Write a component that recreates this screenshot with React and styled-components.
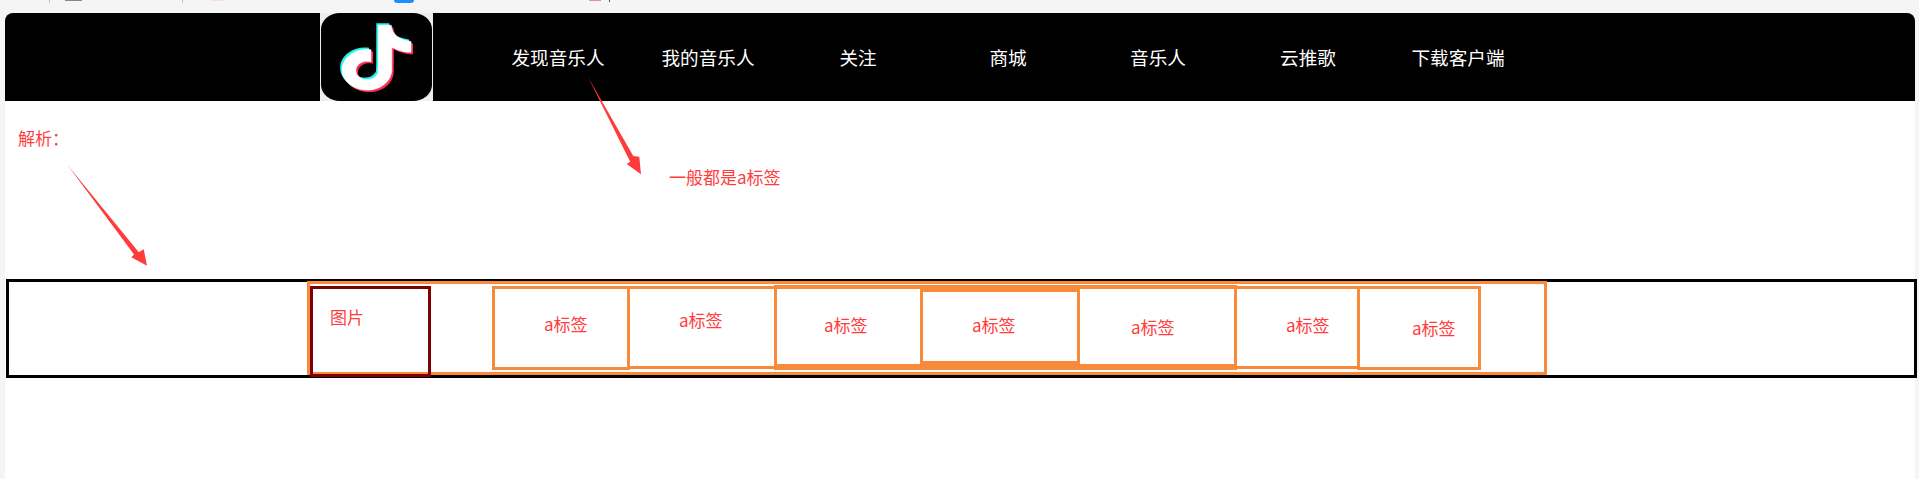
import React from "react";
import styled, { createGlobalStyle } from "styled-components";

const Global = createGlobalStyle`
  html, body { margin: 0; padding: 0; height: 100%; background: #f5f5f5; overflow: hidden; }
  body { font-family: "Noto Sans CJK SC", "Noto Sans", sans-serif; }
`;

const RED = "#ff3d3d";
const ORANGE = "#f98a3a";

const Page = styled.div`
  height: 479px;
  display: flex;
  flex-direction: column;
`;

const TopStrip = styled.div`
  height: 13px;
  display: flex;
  align-items: flex-start;
  padding-left: 49px;
`;

const Mark = styled.span`
  flex: none;
  width: ${(p) => p.$w}px;
  height: ${(p) => p.$h}px;
  background: ${(p) => p.$c};
  margin-left: ${(p) => p.$ml}px;
`;

const BluePill = styled.span`
  flex: none;
  width: 20px;
  height: 3px;
  background: #1e8fff;
  border-radius: 0 0 3px 3px;
  margin-left: ${(p) => p.$ml}px;
`;

const Canvas = styled.main`
  position: relative;
  flex: 1;
  margin: 0 4px 0 5px;
  background: #fff;
  border-radius: 8px 8px 0 0;
`;

const Header = styled.header`
  height: 88px;
  background: #000;
  border-radius: 8px 8px 0 0;
  display: flex;
  padding-left: 315px;
`;

const Logo = styled.svg`
  width: 113px;
  height: 88px;
  display: block;
  background: #eeeeee;
  flex: none;
`;

const Nav = styled.nav`
  display: flex;
  margin-left: 50px;
`;

const NavItem = styled.a`
  width: 150px;
  display: flex;
  align-items: center;
  justify-content: center;
  color: #fff;
  font-size: 18.6px;
  line-height: 88px;
  white-space: nowrap;
`;

const Note = styled.p`
  position: absolute;
  margin: 0;
  left: ${(p) => p.$left}px;
  top: ${(p) => p.$top}px;
  color: ${RED};
  font-size: 17px;
  line-height: 17px;
  white-space: nowrap;
`;

const Arrow = styled.svg`
  position: absolute;
  left: ${(p) => p.$left}px;
  top: ${(p) => p.$top}px;
  fill: #ff3b3b;
  overflow: visible;
`;

const Frame = styled.section`
  box-sizing: border-box;
  width: 1911px;
  height: 99px;
  margin: 178px 0 0 1px;
  border: 3px solid #000;
  padding-left: 298px;
`;

const Wrapper = styled.div`
  box-sizing: border-box;
  width: 1240px;
  height: 94px;
  margin-top: -1px;
  border: 3px solid ${ORANGE};
  padding-top: 2px;
  display: flex;
  align-items: flex-start;
`;

const ImageBox = styled.div`
  box-sizing: border-box;
  width: 121px;
  height: 91px;
  border: 3px solid #7f0000;
  flex: none;
`;

const LinkBox = styled.div`
  box-sizing: border-box;
  flex: none;
  width: ${(p) => p.$w}px;
  height: ${(p) => p.$h}px;
  margin-left: ${(p) => p.$ml}px;
  margin-top: ${(p) => p.$mt || 0}px;
  border: 3px solid ${ORANGE};
  border-top-width: ${(p) => p.$bt || 3}px;
  border-bottom-width: ${(p) => p.$bb || 3}px;
`;

const Label = styled.span`
  display: block;
  margin-left: ${(p) => p.$x}px;
  margin-top: ${(p) => p.$y}px;
  color: ${RED};
  font-size: 17px;
  line-height: 17px;
  white-space: nowrap;
`;

const NOTE =
  "M12.525.02c1.31-.02 2.61-.01 3.91-.02.08 1.53.63 3.09 1.75 4.17 1.12 1.11 2.7 1.62 4.24 1.79v4.03c-1.44-.05-2.89-.35-4.2-.97-.57-.26-1.1-.59-1.62-.93-.01 2.92.01 5.84-.02 8.75-.08 1.4-.54 2.79-1.35 3.94-1.31 1.92-3.58 3.17-5.91 3.21-1.43.08-2.86-.31-4.08-1.03-2.02-1.19-3.44-3.37-3.65-5.71-.02-.5-.03-1-.01-1.49.18-1.9 1.12-3.72 2.58-4.96 1.66-1.44 3.98-2.13 6.15-1.72.02 1.48-.04 2.96-.04 4.44-.99-.32-2.15-.23-3.02.37-.63.41-1.11 1.04-1.36 1.75-.21.51-.15 1.07-.14 1.61.24 1.64 1.82 3.02 3.5 2.87 1.12-.01 2.19-.66 2.77-1.61.19-.33.4-.67.41-1.06.1-1.79.06-3.57.07-5.36.01-4.03-.01-8.05.02-12.07z";

const navItems = ["发现音乐人", "我的音乐人", "关注", "商城", "音乐人", "云推歌", "下载客户端"];

const links = [
  { w: 138, h: 84, ml: 61, x: 49, y: 26 },
  { w: 150, h: 83, ml: -3, x: 49, y: 22 },
  { w: 149, h: 85, ml: -3, mt: -1, bt: 4, bb: 6, x: 47, y: 27 },
  { w: 160, h: 85, ml: -3, mt: -1, bt: 7, bb: 9, x: 49, y: 24 },
  { w: 160, h: 85, ml: -3, mt: -1, bt: 4, bb: 6, x: 51, y: 29 },
  { w: 126, h: 83, ml: -3, x: 49, y: 27 },
  { w: 124, h: 84, ml: -3, x: 52, y: 30 },
];

export default function App() {
  return (
    <Page>
      <Global />
      <TopStrip>
        <Mark $w={1} $h={3} $c="#c4c4c4" $ml={0} />
        <Mark $w={17} $h={1} $c="#888888" $ml={15} />
        <Mark $w={1} $h={3} $c="#c4c4c4" $ml={100} />
        <Mark $w={12} $h={1} $c="#fadcdc" $ml={28} />
        <BluePill $ml={171} />
        <Mark $w={12} $h={1} $c="#e88aa0" $ml={175} />
        <Mark $w={1} $h={2} $c="#555555" $ml={8} />
      </TopStrip>
      <Canvas>
        <Header>
          <Logo viewBox="0 0 113 88" preserveAspectRatio="none">
            <rect x="1" y="0" width="111" height="88" rx="19" ry="16" fill="#000" />
            <g transform="translate(15 10.3) scale(3.3 2.7)">
              <path d={NOTE} fill="#25f4ee" />
            </g>
            <g transform="translate(19 14.3) scale(3.3 2.7)">
              <path d={NOTE} fill="#fe2c55" />
            </g>
            <g transform="translate(17 12.3) scale(3.3 2.7)">
              <path d={NOTE} fill="#fff" stroke="#fff" strokeWidth="0.2" />
            </g>
          </Logo>
          <Nav>
            {navItems.map((t) => (
              <NavItem key={t}>{t}</NavItem>
            ))}
          </Nav>
        </Header>

        <Note $left={13} $top={116}>解析：</Note>
        <Note $left={664} $top={155}>一般都是a标签</Note>

        <Arrow $left={62} $top={152} width="85" height="102" viewBox="62 152 85 102">
          <polygon points="62.5,152 133.8,239.3 138.7,236.3 142,252.7 126.4,244.3 129,241.5" />
        </Arrow>
        <Arrow $left={583} $top={64} width="54" height="98" viewBox="583 64 54 98">
          <polygon points="583,64 628.3,143 634.3,143.7 636,161.3 621.7,151 625.2,148.7" />
        </Arrow>

        <Frame>
          <Wrapper>
            <ImageBox>
              <Label $x={17} $y={19}>图片</Label>
            </ImageBox>
            {links.map((l, i) => (
              <LinkBox key={i} $w={l.w} $h={l.h} $ml={l.ml} $mt={l.mt} $bt={l.bt} $bb={l.bb}>
                <Label $x={l.x} $y={l.y}>a标签</Label>
              </LinkBox>
            ))}
          </Wrapper>
        </Frame>
      </Canvas>
    </Page>
  );
}
